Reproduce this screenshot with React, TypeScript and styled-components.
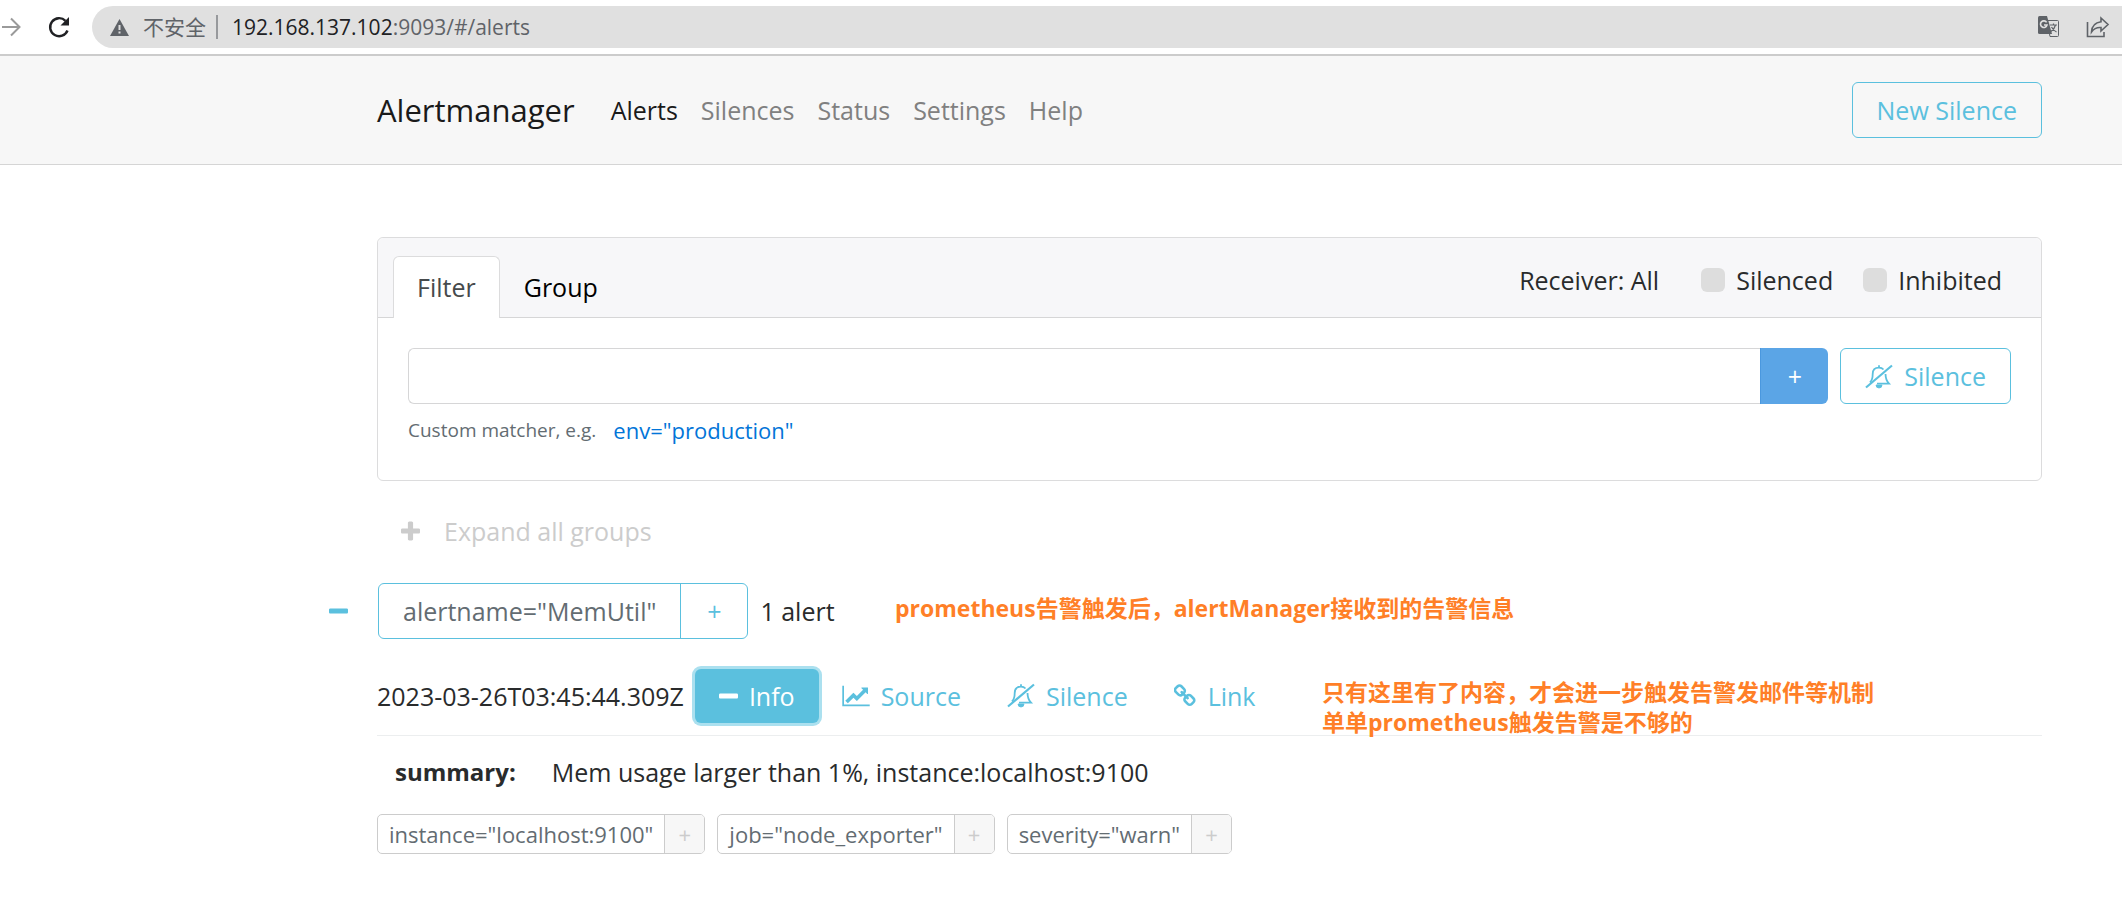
import React from 'react';
import styled, { createGlobalStyle, css } from 'styled-components';

const Global = createGlobalStyle`
  *, *::before, *::after { box-sizing: border-box; }
  body {
    margin: 0;
    background: #fff;
    color: #292b2c;
    font: 25px/36px "Open Sans", "Noto Sans CJK SC", sans-serif;
  }
  button, input { font: inherit; color: inherit; }
  button { cursor: pointer; background: none; border: 0; padding: 0; white-space: nowrap; }
  a { color: inherit; text-decoration: none; }
`;

const INFO = '#5bc0de';

const BrowserBar = styled.div`
  display: flex;
  align-items: center;
  height: 56px;
  border-bottom: 2px solid #ccc;
  color: #202124;
`;
const ToolButton = styled.button<{ $muted?: boolean }>`
  display: flex;
  color: ${(p) => (p.$muted ? '#9a9a9a' : '#202124')};
`;
const ToolGroup = styled.div`
  display: flex;
  align-items: center;
  gap: 25px;
  width: 92px;
  flex: none;
`;
const AddressPill = styled.div`
  flex: 1;
  display: flex;
  align-items: center;
  height: 42px;
  padding: 0 12px 0 18px;
  border-radius: 21px 0 0 21px;
  background: #e0e0e0;
  color: #5f6368;
  font-size: 21px;
  line-height: 28px;
`;
const Security = styled.span`
  margin-left: 14px;
  padding-right: 10px;
  border-right: 2px solid #97999c;
  line-height: 24px;
`;
const Address = styled.span`
  flex: 1;
  margin-left: 14px;
  b { font-weight: 400; color: #202124; }
`;
const PillActions = styled.div`
  display: flex;
  align-items: center;
  gap: 26px;
  color: #5f6368;
`;

const Header = styled.header`
  display: flex;
  align-items: center;
  height: 109px;
  padding: 0 80px 0 377px;
  background: #f7f7f7;
  border-bottom: 1px solid #d5d5d5;
`;
const Brand = styled.a`
  font-size: 31px;
  color: #1a1a1a;
`;
const Nav = styled.nav`
  flex: 1;
  display: flex;
  gap: 23px;
  margin-left: 36px;
`;
const NavLink = styled.a<{ $active?: boolean }>`
  color: ${(p) => (p.$active ? '#1a1a1a' : '#808080')};
`;

const buttonBox = css`
  display: inline-flex;
  align-items: center;
  height: 56px;
  padding: 0 24px;
  border-radius: 6px;
`;
const OutlineButton = styled.button`
  ${buttonBox}
  gap: 11px;
  border: 1px solid ${INFO};
  color: ${INFO};
`;

const Main = styled.main`
  padding: 72px 80px 0 377px;
`;
const Card = styled.section`
  border: 1px solid #dcdcdd;
  border-radius: 6px;
`;
const CardHeader = styled.div`
  display: flex;
  align-items: flex-end;
  justify-content: space-between;
  height: 80px;
  padding: 0 39px 0 15px;
  background: #f7f7f9;
  border-bottom: 1px solid #d6d6d7;
  border-radius: 6px 6px 0 0;
`;
const Tabs = styled.div`
  display: flex;
  margin-bottom: -1px;
`;
const Tab = styled.button<{ $active?: boolean }>`
  height: 62px;
  padding: 0 23px 2px;
  border: 1px solid transparent;
  border-bottom: 0;
  border-radius: 6px 6px 0 0;
  color: #000;
  ${(p) => p.$active && css`
    color: #464a4c;
    background: #fff;
    border-color: #dcdcdd;
  `}
`;
const Options = styled.div`
  display: flex;
  align-items: center;
  gap: 30px;
  height: 36px;
  margin-bottom: 19px;
`;
const Receiver = styled.button`
  margin-right: 12px;
`;
const Check = styled.label`
  display: flex;
  align-items: center;
  gap: 11px;
  input {
    appearance: none;
    width: 24px;
    height: 24px;
    margin: 0;
    border-radius: 6px;
    background: #ddd;
  }
`;
const CardBody = styled.div`
  padding: 30px 30px 32px;
`;
const MatcherRow = styled.div`
  display: flex;
`;
const MatcherInput = styled.input`
  flex: 1;
  min-width: 0;
  height: 56px;
  padding: 0 18px;
  border: 1px solid #d6d6d7;
  border-right: 0;
  border-radius: 6px 0 0 6px;
`;
const AddMatcher = styled.button`
  width: 68px;
  margin-right: 12px;
  border-left: 1px solid #4a98df;
  border-radius: 0 6px 6px 0;
  background: #5ba5e6;
  color: #fff;
`;
const Hint = styled.p`
  display: flex;
  align-items: center;
  gap: 17px;
  margin: 8px 0 0;
  color: #636c72;
  font-size: 19px;
  a { color: #0275d8; font-size: 22px; }
`;

const ExpandButton = styled.button`
  display: flex;
  align-items: center;
  gap: 24px;
  height: 56px;
  margin: 22px 0 0 24px;
  color: #ccc;
`;
const GroupRow = styled.div`
  position: relative;
  display: flex;
  align-items: center;
  margin: 24px 0 0 -48px;
`;
const CollapseButton = styled.button`
  display: flex;
  width: 49px;
  color: ${INFO};
`;
const LabelGroup = styled.div<{ $small?: boolean }>`
  display: flex;
  height: 56px;
  border: 1px solid ${INFO};
  border-radius: 6px;
  color: ${INFO};
  overflow: hidden;
  ${(p) => p.$small && css`
    height: 40px;
    border-color: #ccc;
    border-radius: 5px;
    color: #ccc;
    font-size: 22px;
  `}
`;
const LabelText = styled.span<{ $small?: boolean }>`
  display: flex;
  align-items: center;
  padding: 0 ${(p) => (p.$small ? 11 : 24)}px;
  color: #636c72;
`;
const LabelAdd = styled.button<{ $small?: boolean }>`
  width: ${(p) => (p.$small ? 40 : 67)}px;
  border-left: 1px solid ${(p) => (p.$small ? '#ccc' : INFO)};
  background: ${(p) => (p.$small ? '#f7f7f7' : 'none')};
`;
const Count = styled.span`
  margin-left: 12px;
`;
const Note = styled.p`
  position: absolute;
  margin: 0;
  color: #ff7f27;
  font: 700 23px/30px "Open Sans", "Noto Sans CJK SC", sans-serif;
  white-space: pre;
`;
const GroupNote = styled(Note)`
  left: 566px;
  top: 10px;
`;
const AlertNote = styled(Note)`
  left: 945px;
  top: 10px;
`;

const AlertRow = styled.div`
  position: relative;
  display: flex;
  align-items: center;
  height: 69px;
  margin-top: 28px;
  padding-bottom: 11px;
  border-bottom: 1px solid #eceeef;
`;
const Time = styled.time`
  margin-right: 11px;
`;
const InfoButton = styled.button`
  ${buttonBox}
  height: 54px;
  gap: 11px;
  background: ${INFO};
  color: #fff;
  box-shadow: 0 0 0 3px #abe0ef;
`;
const LinkButton = styled.a`
  ${buttonBox}
  padding: 0 23px;
  gap: 11px;
  color: ${INFO};
`;
const Annotations = styled.table`
  margin: 18px 0 0;
  border-collapse: collapse;
  th, td { padding: 0 18px; text-align: left; }
  th { font-size: 24px; }
`;
const Labels = styled.div`
  display: flex;
  gap: 12px;
  margin-top: 24px;
`;

const PATHS = {
  plus: 'M1600 736v192q0 40-28 68t-68 28h-416v416q0 40-28 68t-68 28h-192q-40 0-68-28t-28-68v-416h-416q-40 0-68-28t-28-68v-192q0-40 28-68t68-28h416v-416q0-40 28-68t68-28h192q40 0 68 28t28 68v416h416q40 0 68 28t28 68z',
  minus: 'M1600 736v192q0 40-28 68t-68 28h-1216q-40 0-68-28t-28-68v-192q0-40 28-68t68-28h1216q40 0 68 28t28 68z',
  chart: 'M2048 1536v128h-2048v-1536h128v1408h1920zM1920 288v435q0 21-19.5 29.5t-35.5-7.5l-121-121-633 633q-10 10-23 10t-23-10l-233-233-416 416-192-192 585-585q10-10 23-10t23 10l233 233 464-464-121-121q-16-16-7.5-35.5t29.5-19.5h435q14 0 23 9t9 23z',
  link: 'M1456 1216q0-40-28-68l-208-208q-28-28-68-28-42 0-72 32 3 3 19 18.5t21.5 21.5 15 19 13 25.5 3.5 27.5q0 40-28 68t-68 28q-15 0-27.5-3.5t-25.5-13-19-15-21.5-21.5-18.5-19q-33 31-33 73 0 40 28 68l206 207q27 27 68 27 40 0 68-26l147-146q28-28 28-67zm-703-705q0-40-28-68l-206-207q-28-28-68-28-39 0-68 27l-147 146q-28 28-28 67 0 40 28 68l208 208q27 27 68 27 42 0 72-31-3-3-19-18.5t-21.5-21.5-15-19-13-25.5-3.5-27.5q0-40 28-68t68-28q15 0 27.5 3.5t25.5 13 19 15 21.5 21.5 18.5 19q33-31 33-73zm895 705q0 120-85 203l-147 146q-83 83-203 83-121 0-204-85l-206-207q-83-83-83-203 0-123 88-209l-88-88q-86 88-208 88-120 0-204-84l-208-208q-84-84-84-204t85-203l147-146q83-83 203-83 121 0 204 85l206 207q83 83 83 203 0 123-88 209l88 88q86-88 208-88 120 0 204 84l208 208q84 84 84 204z',
};
const FIT: Record<keyof typeof PATHS, [string, number]> = {
  plus: ['192 0 1408 1664', 19],
  minus: ['192 0 1408 1664', 19],
  chart: ['0 0 2048 1792', 28],
  link: ['70 0 1652 1792', 23],
};
const Icon = ({ name }: { name: keyof typeof PATHS }) => (
  <svg viewBox={FIT[name][0]} width={FIT[name][1]} height={24} fill="currentColor" aria-hidden>
    <path d={PATHS[name]} />
  </svg>
);
const BellSlash = () => (
  <svg viewBox="0 0 28 25" width="28" height="25" fill="none" stroke="currentColor" aria-hidden>
    <path d="M5 18.5C7.5 16 7.7 13 7.7 10C7.7 6 10.2 3.7 14 3.7C16 3.7 17.5 4.4 18.5 5.5M14 3.5V1.2M20.5 10C20.6 14 21.4 17 24 19.7H12" strokeWidth="1.8" />
    <path d="M1 23.5L27 1.5" strokeWidth="2.2" />
    <path d="M11 21h6a3 3 0 0 1-6 0z" fill="currentColor" strokeWidth="0.8" />
  </svg>
);

const tags = ['instance="localhost:9100"', 'job="node_exporter"', 'severity="warn"'];

export default function App() {
  return (
    <>
      <Global />
      <BrowserBar>
        <ToolGroup>
          <ToolButton $muted aria-label="Forward">
            <svg width="22" height="22" viewBox="0 0 22 22" fill="none" stroke="currentColor" strokeWidth="2">
              <path d="M2 11H19M11 2.5L19.5 11L11 19.5" />
            </svg>
          </ToolButton>
          <ToolButton aria-label="Reload">
            <svg width="24" height="24" viewBox="0 0 24 24" fill="none" stroke="currentColor" strokeWidth="2.4">
              <path d="M20.5 15.5A9 9 0 1 1 18.5 5.8" />
              <path d="M22 2V10.5H13.5Z" fill="currentColor" stroke="none" />
            </svg>
          </ToolButton>
        </ToolGroup>
        <AddressPill>
          <svg width="19" height="17" viewBox="0 0 19 17" aria-hidden>
            <path d="M9.5 0L19 17H0Z" fill="#5f6368" />
            <path d="M8.5 6h2v5h-2zM8.5 12.5h2v2h-2z" fill="#e0e0e0" />
          </svg>
          <Security>不安全</Security>
          <Address><b>192.168.137.102</b>:9093/#/alerts</Address>
          <PillActions>
            <ToolButton aria-label="Translate">
              <svg width="22" height="22" viewBox="0 0 22 22" aria-hidden>
                <path d="M9 4.5H19.5Q20.5 4.5 20.5 5.5V19.5Q20.5 20.5 19.5 20.5H12Z" fill="none" stroke="#5f6368" />
                <path d="M1.5 0H9L14 18H1.5Q0 18 0 16.5V1.5Q0 0 1.5 0Z" fill="#5f6368" />
                <path d="M8.6 6.4A3.3 3.3 0 1 0 9 9H6" fill="none" stroke="#e0e0e0" strokeWidth="1.6" />
                <path d="M12 9H19M15.5 7.5V9M17.5 9Q16.5 13 13 15.5M13.5 11Q15.5 14.5 18.5 16" fill="none" stroke="#5f6368" strokeWidth="1.2" />
              </svg>
            </ToolButton>
            <ToolButton aria-label="Share">
              <svg width="24" height="24" viewBox="0 0 24 24" fill="none" stroke="#5f6368" strokeWidth="1.6" aria-hidden>
                <path d="M1.5 7V21.5H18V17M15 3L22 9.5L15 16V12.5Q9 12 5.5 17Q6 8 15 6.8Z" />
              </svg>
            </ToolButton>
          </PillActions>
        </AddressPill>
      </BrowserBar>
      <Header>
        <Brand href="#">Alertmanager</Brand>
        <Nav>
          <NavLink href="#/alerts" $active>Alerts</NavLink>
          <NavLink href="#/silences">Silences</NavLink>
          <NavLink href="#/status">Status</NavLink>
          <NavLink href="#/settings">Settings</NavLink>
          <NavLink href="#/help">Help</NavLink>
        </Nav>
        <OutlineButton>New Silence</OutlineButton>
      </Header>
      <Main>
        <Card>
          <CardHeader>
            <Tabs>
              <Tab $active>Filter</Tab>
              <Tab>Group</Tab>
            </Tabs>
            <Options>
              <Receiver>Receiver: All</Receiver>
              <Check><input type="checkbox" />Silenced</Check>
              <Check><input type="checkbox" />Inhibited</Check>
            </Options>
          </CardHeader>
          <CardBody>
            <MatcherRow>
              <MatcherInput type="text" aria-label="Custom matcher" />
              <AddMatcher>+</AddMatcher>
              <OutlineButton><BellSlash />Silence</OutlineButton>
            </MatcherRow>
            <Hint>Custom matcher, e.g. <a href="#/alerts">env="production"</a></Hint>
          </CardBody>
        </Card>
        <ExpandButton><Icon name="plus" />Expand all groups</ExpandButton>
        <GroupRow>
          <CollapseButton aria-label="Collapse group"><Icon name="minus" /></CollapseButton>
          <LabelGroup>
            <LabelText>alertname="MemUtil"</LabelText>
            <LabelAdd>+</LabelAdd>
          </LabelGroup>
          <Count>1 alert</Count>
          <GroupNote>prometheus告警触发后，alertManager接收到的告警信息</GroupNote>
        </GroupRow>
        <AlertRow>
          <Time>2023-03-26T03:45:44.309Z</Time>
          <InfoButton><Icon name="minus" />Info</InfoButton>
          <LinkButton href="#/source"><Icon name="chart" />Source</LinkButton>
          <LinkButton href="#/silences/new"><BellSlash />Silence</LinkButton>
          <LinkButton href="#/alerts"><Icon name="link" />Link</LinkButton>
          <AlertNote>{'只有这里有了内容，才会进一步触发告警发邮件等机制\n单单prometheus触发告警是不够的'}</AlertNote>
        </AlertRow>
        <Annotations>
          <tbody>
            <tr><th scope="row">summary:</th><td>Mem usage larger than 1%, instance:localhost:9100</td></tr>
          </tbody>
        </Annotations>
        <Labels>
          {tags.map((t) => (
            <LabelGroup $small key={t}>
              <LabelText $small>{t}</LabelText>
              <LabelAdd $small>+</LabelAdd>
            </LabelGroup>
          ))}
        </Labels>
      </Main>
    </>
  );
}
